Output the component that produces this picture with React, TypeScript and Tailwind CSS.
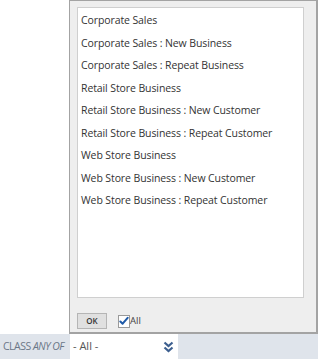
import React from 'react';

const items = [
  'Corporate Sales',
  'Corporate Sales : New Business',
  'Corporate Sales : Repeat Business',
  'Retail Store Business',
  'Retail Store Business : New Customer',
  'Retail Store Business : Repeat Customer',
  'Web Store Business',
  'Web Store Business : New Customer',
  'Web Store Business : Repeat Customer',
];

const App: React.FC = () => {
  return (
    <div className="w-[318px] h-[359px] bg-white flex flex-col overflow-hidden font-['Open_Sans',sans-serif]">
      <div className="flex h-[334px]">
        <div className="w-[69px] shrink-0 bg-white" />
        <div className="flex-1 flex flex-col bg-[#eeeeee] border-t border-l border-r-2 border-b-2 border-[#a3a3a3] pl-[7px] pr-[12px] pt-[6px]">
          <div className="h-[291px] bg-white border border-[#cfcfcf] pt-[1px] pl-[3px]">
            {items.map((item) => (
              <div key={item} className="h-[22.5px] text-[10.5px] tracking-[-0.1px] leading-[22.5px] text-[#333333] whitespace-nowrap">
                {item}
              </div>
            ))}
          </div>
          <div className="flex items-center mt-[15px] gap-[11px]">
            <button className="w-[30px] h-[16px] bg-[#e0e0e0] border border-[#b5b5b5] text-[8px] font-semibold text-[#333] flex items-center justify-center">
              OK
            </button>
            <label className="flex items-center text-[9.5px] text-[#444]">
              <span className="w-[12px] h-[13px] bg-white border border-[#9a9a9a] flex items-center justify-center">
                <svg width="11" height="10" viewBox="0 0 11 10">
                  <path d="M1.5 5.5 L4 8 L9.5 1.5" fill="none" stroke="#1f5aa8" strokeWidth="2.2" strokeLinecap="round" strokeLinejoin="round" />
                </svg>
              </span>
              <span>All</span>
            </label>
          </div>
        </div>
      </div>
      <div className="flex-1 flex items-stretch bg-[#dfe4eb]">
        <div className="w-[70px] flex items-center pl-[3px] text-[10.5px] text-[#6b7787] whitespace-nowrap tracking-[-0.5px]">
          CLASS&nbsp;<span className="italic">ANY OF</span>
        </div>
        <div className="w-[108px] bg-white flex items-center justify-between pl-[3px] pr-[4px]">
          <span className="text-[11px] text-[#555]">- All -</span>
          <svg width="11" height="12" viewBox="0 0 11 12">
            <path d="M1.5 1.5 L5.5 5 L9.5 1.5" fill="none" stroke="#3d5f8f" strokeWidth="2.2" />
            <path d="M1.5 6.5 L5.5 10 L9.5 6.5" fill="none" stroke="#3d5f8f" strokeWidth="2.2" />
          </svg>
        </div>
      </div>
    </div>
  );
};

export default App;
